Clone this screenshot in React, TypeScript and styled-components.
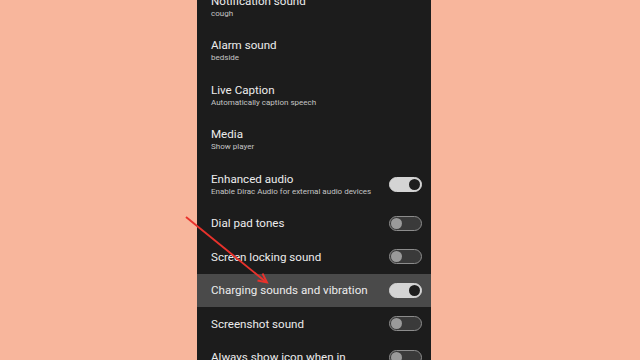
import React from "react";
import styled, { createGlobalStyle } from "styled-components";

const Global = createGlobalStyle`
  html, body { margin: 0; padding: 0; background: #f8b69c; overflow: hidden; }
  body { font-family: Roboto, "Noto Sans", sans-serif; }
`;

const Page = styled.div`
  position: relative;
  width: 640px;
  height: 360px;
  overflow: hidden;
  background: #f8b69c;
`;

const Phone = styled.div`
  margin-left: 197px;
  width: 234px;
  height: 360px;
  background: #1c1c1c;
  overflow: hidden;
`;

const List = styled.div`
  display: flex;
  flex-direction: column;
  margin-top: -16px;
`;

const Row = styled.div<{ $two?: boolean; $active?: boolean }>`
  display: flex;
  align-items: center;
  justify-content: space-between;
  height: ${(p) => (p.$two ? "44.5px" : "33.5px")};
  padding: 0 9px 0 14px;
  box-sizing: border-box;
  background: ${(p) => (p.$active ? "#4a4a4a" : "transparent")};
  flex-shrink: 0;
`;

const Texts = styled.div`
  display: flex;
  flex-direction: column;
  min-width: 0;
`;

const Title = styled.div`
  color: #ececec;
  font-size: 11.6px;
  line-height: 14px;
  white-space: nowrap;
`;

const Sub = styled.div`
  color: #c4c4c4;
  font-size: 8px;
  line-height: 11px;
  white-space: nowrap;
`;

const Track = styled.div<{ $on?: boolean }>`
  position: relative;
  width: 33px;
  height: 15px;
  box-sizing: border-box;
  border-radius: 8px;
  flex-shrink: 0;
  background: ${(p) => (p.$on ? "#d4d4d4" : "#3a3a3a")};
  border: 1px solid ${(p) => (p.$on ? "#d4d4d4" : "#8c8c8c")};
`;

const Thumb = styled.div<{ $on?: boolean }>`
  position: absolute;
  top: 1px;
  ${(p) => (p.$on ? "right: 1px;" : "left: 1px;")}
  width: 11px;
  height: 11px;
  border-radius: 50%;
  background: ${(p) => (p.$on ? "#1e1e1e" : "#9a9a9a")};
`;

const Arrow = styled.svg`
  position: absolute;
  left: 0;
  top: 0;
  pointer-events: none;
`;

function Toggle({ on }: { on?: boolean }) {
  return (
    <Track $on={on}>
      <Thumb $on={on} />
    </Track>
  );
}

type Item = { title: string; sub?: string; toggle?: boolean; on?: boolean; active?: boolean };

const items: Item[] = [
  { title: "Notification sound", sub: "cough" },
  { title: "Alarm sound", sub: "bedside" },
  { title: "Live Caption", sub: "Automatically caption speech" },
  { title: "Media", sub: "Show player" },
  { title: "Enhanced audio", sub: "Enable Dirac Audio for external audio devices", toggle: true, on: true },
  { title: "Dial pad tones", toggle: true },
  { title: "Screen locking sound", toggle: true },
  { title: "Charging sounds and vibration", toggle: true, on: true, active: true },
  { title: "Screenshot sound", toggle: true },
  { title: "Always show icon when in", toggle: true },
];

export default function App() {
  return (
    <Page>
      <Global />
      <Phone>
        <List>
          {items.map((it) => (
            <Row key={it.title} $two={!!it.sub} $active={it.active}>
              <Texts>
                <Title>{it.title}</Title>
                {it.sub && <Sub>{it.sub}</Sub>}
              </Texts>
              {it.toggle && <Toggle on={it.on} />}
            </Row>
          ))}
        </List>
      </Phone>
      <Arrow width="640" height="360" viewBox="0 0 640 360">
        <line x1="186" y1="217" x2="266" y2="282" stroke="#e8322c" strokeWidth="1.9" />
        <path d="M257.5 280.5 L267 282.5 L262.5 273.5" fill="none" stroke="#e8322c" strokeWidth="1.9" strokeLinejoin="miter" />
      </Arrow>
    </Page>
  );
}
